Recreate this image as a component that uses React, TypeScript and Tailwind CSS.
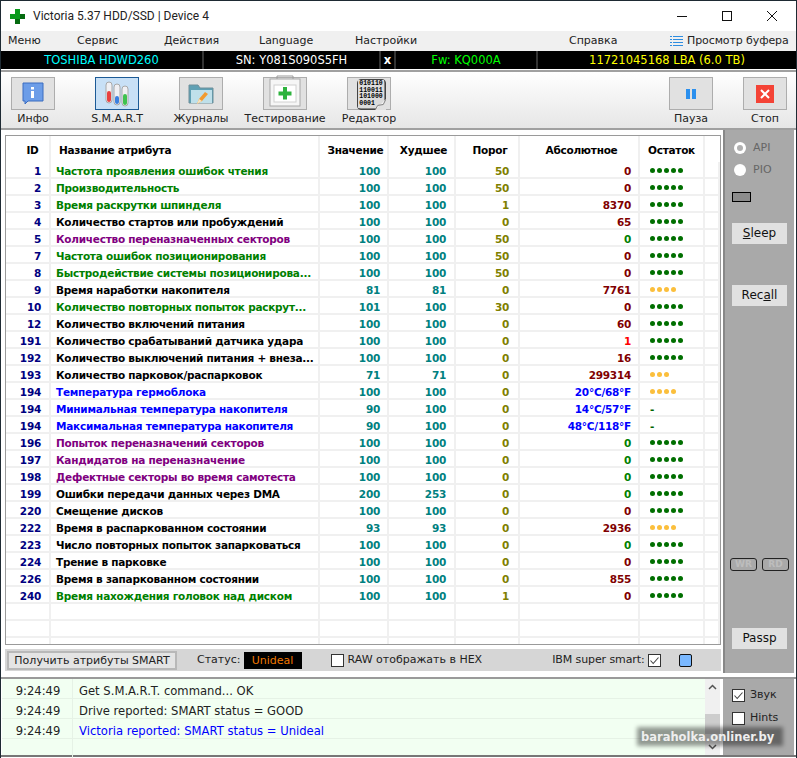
const gridCols = 'grid grid-cols-[45px_269px_69px_67px_64px_120px_65px_1fr]';

type Row = {
  id: number;
  name: string;
  color: string;
  value: number;
  worst: number;
  limit: number;
  raw: string;
  rawColor: string;
  dots: number;
  dotColor?: string;
};

const GREEN = 'text-[#008000]';
const BLACK = 'text-black';
const PURPLE = 'text-[#800080]';
const BLUE = 'text-[#0000ff]';
const MAROON = 'text-[#800000]';
const RAWGREEN = 'text-[#008000]';
const ORANGE = 'bg-[#fbbf3c]';

const rows: Row[] = [
  { id: 1, name: 'Частота проявления ошибок чтения', color: GREEN, value: 100, worst: 100, limit: 50, raw: '0', rawColor: MAROON, dots: 5 },
  { id: 2, name: 'Производительность', color: GREEN, value: 100, worst: 100, limit: 50, raw: '0', rawColor: MAROON, dots: 5 },
  { id: 3, name: 'Время раскрутки шпинделя', color: GREEN, value: 100, worst: 100, limit: 1, raw: '8370', rawColor: MAROON, dots: 5 },
  { id: 4, name: 'Количество стартов или пробуждений', color: BLACK, value: 100, worst: 100, limit: 0, raw: '65', rawColor: MAROON, dots: 5 },
  { id: 5, name: 'Количество переназначенных секторов', color: PURPLE, value: 100, worst: 100, limit: 50, raw: '0', rawColor: RAWGREEN, dots: 5 },
  { id: 7, name: 'Частота ошибок позиционирования', color: GREEN, value: 100, worst: 100, limit: 50, raw: '0', rawColor: MAROON, dots: 5 },
  { id: 8, name: 'Быстродействие системы позиционирова...', color: GREEN, value: 100, worst: 100, limit: 50, raw: '0', rawColor: MAROON, dots: 5 },
  { id: 9, name: 'Время наработки накопителя', color: BLACK, value: 81, worst: 81, limit: 0, raw: '7761', rawColor: MAROON, dots: 4, dotColor: ORANGE },
  { id: 10, name: 'Количество повторных попыток раскрут...', color: GREEN, value: 101, worst: 100, limit: 30, raw: '0', rawColor: MAROON, dots: 5 },
  { id: 12, name: 'Количество включений питания', color: BLACK, value: 100, worst: 100, limit: 0, raw: '60', rawColor: MAROON, dots: 5 },
  { id: 191, name: 'Количество срабатываний датчика удара', color: BLACK, value: 100, worst: 100, limit: 0, raw: '1', rawColor: 'text-[#ff0000]', dots: 5 },
  { id: 192, name: 'Количество выключений питания + внеза...', color: BLACK, value: 100, worst: 100, limit: 0, raw: '16', rawColor: MAROON, dots: 5 },
  { id: 193, name: 'Количество парковок/распарковок', color: BLACK, value: 71, worst: 71, limit: 0, raw: '299314', rawColor: MAROON, dots: 3, dotColor: ORANGE },
  { id: 194, name: 'Температура гермоблока', color: BLUE, value: 100, worst: 100, limit: 0, raw: '20°C/68°F', rawColor: BLUE, dots: 4, dotColor: ORANGE },
  { id: 194, name: 'Минимальная температура накопителя', color: BLUE, value: 90, worst: 100, limit: 0, raw: '14°C/57°F', rawColor: BLUE, dots: 0 },
  { id: 194, name: 'Максимальная температура накопителя', color: BLUE, value: 90, worst: 100, limit: 0, raw: '48°C/118°F', rawColor: BLUE, dots: 0 },
  { id: 196, name: 'Попыток переназначений секторов', color: PURPLE, value: 100, worst: 100, limit: 0, raw: '0', rawColor: RAWGREEN, dots: 5 },
  { id: 197, name: 'Кандидатов на переназначение', color: PURPLE, value: 100, worst: 100, limit: 0, raw: '0', rawColor: RAWGREEN, dots: 5 },
  { id: 198, name: 'Дефектные секторы во время самотеста', color: PURPLE, value: 100, worst: 100, limit: 0, raw: '0', rawColor: RAWGREEN, dots: 5 },
  { id: 199, name: 'Ошибки передачи данных через DMA', color: BLACK, value: 200, worst: 253, limit: 0, raw: '0', rawColor: RAWGREEN, dots: 5 },
  { id: 220, name: 'Смещение дисков', color: BLACK, value: 100, worst: 100, limit: 0, raw: '0', rawColor: MAROON, dots: 5 },
  { id: 222, name: 'Время в распаркованном состоянии', color: BLACK, value: 93, worst: 93, limit: 0, raw: '2936', rawColor: MAROON, dots: 4, dotColor: ORANGE },
  { id: 223, name: 'Число повторных попыток запарковаться', color: BLACK, value: 100, worst: 100, limit: 0, raw: '0', rawColor: RAWGREEN, dots: 5 },
  { id: 224, name: 'Трение в парковке', color: BLACK, value: 100, worst: 100, limit: 0, raw: '0', rawColor: MAROON, dots: 5 },
  { id: 226, name: 'Время в запаркованном состоянии', color: BLACK, value: 100, worst: 100, limit: 0, raw: '855', rawColor: MAROON, dots: 5 },
  { id: 240, name: 'Время нахождения головок над диском', color: GREEN, value: 100, worst: 100, limit: 1, raw: '0', rawColor: MAROON, dots: 5 },
];

function ToolButton({ label, active, width, children }: { label: string; active?: boolean; width: string; children: React.ReactNode }) {
  return (
    <div className={`flex flex-col items-center ${width}`}>
      <div
        className={`w-[44px] h-[33px] shrink-0 border flex items-center justify-center ${
          active ? 'border-[#1c5a96] bg-[#c8e0f6]' : 'border-[#adadad] bg-[#e1e1e1]'
        }`}
      >
        {children}
      </div>
      <span className="mt-[1px] text-[11px] leading-[16px] text-[#222] whitespace-nowrap">{label}</span>
    </div>
  );
}

function Cell({ children, className }: { children?: React.ReactNode; className?: string }) {
  return <div className={`h-[17px] border-r-2 border-b-2 border-[#f0f0f0] leading-[19px] whitespace-nowrap ${className ?? ''}`}>{children}</div>;
}

function Check({ checked, className }: { checked?: boolean; className?: string }) {
  return (
    <span className={`inline-flex shrink-0 w-[13px] h-[13px] border border-[#333] bg-white items-center justify-center ${className ?? ''}`}>
      {checked && (
        <svg width="11" height="11" viewBox="0 0 11 11">
          <path d="M1.5 5.5 L4.2 8.5 L9.5 2.5" fill="none" stroke="#444" strokeWidth="1.1" />
        </svg>
      )}
    </span>
  );
}

export default function App() {
  return (
    <div className="w-[797px] h-[758px] bg-white overflow-hidden relative font-['DejaVu_Sans',sans-serif] border-t border-x border-[#1e2a33] text-[#111]">
      {/* title bar */}
      <div className="h-[30px] flex items-center bg-white">
        <svg className="ml-[9px]" width="15" height="15" viewBox="0 0 15 15">
          <path d="M5 0h5v5h5v5h-5v5H5v-5H0V5h5z" fill="#0a9a1c" />
          <path d="M5 10h5v5H5zM10 5h5v5h-5z" fill="#056b10" />
        </svg>
        <span className="ml-[8px] font-['Roboto',sans-serif] text-[12px] text-[#222]">Victoria 5.37 HDD/SSD | Device 4</span>
        <div className="ml-auto flex items-center mr-[19px] gap-[35px]">
          <svg width="10" height="10" viewBox="0 0 10 10"><path d="M0 5.5h10" stroke="#111" /></svg>
          <svg width="10" height="10" viewBox="0 0 10 10"><rect x="0.5" y="0.5" width="9" height="9" fill="none" stroke="#111" /></svg>
          <svg width="10" height="10" viewBox="0 0 10 10"><path d="M0 0l10 10M10 0L0 10" stroke="#111" /></svg>
        </div>
      </div>

      {/* menu */}
      <div className="h-[20px] bg-[#f0f0f0] relative flex items-center text-[11px] text-[#222]">
        <span className="ml-[7px] w-[69px]">Меню</span>
        <span className="w-[87px]">Сервис</span>
        <span className="w-[95px]">Действия</span>
        <span className="w-[96px]">Language</span>
        <span className="w-[214px]">Настройки</span>
        <span className="w-[101px]">Справка</span>
        <svg width="13" height="13" viewBox="0 0 13 13">
          <path d="M0 1.5h2M3 1.5h10M0 4.5h2M3 4.5h10M0 7.5h2M3 7.5h10M0 10.5h2M3 10.5h10" stroke="#2e8de0" />
        </svg>
        <span className="ml-[4px] tracking-[-0.1px]">Просмотр буфера</span>
      </div>

      {/* drive info */}
      <div className="h-[18px] bg-black flex text-[11.5px] leading-[18px] text-center">
        <div className="w-[201px] text-[#00ffff]">TOSHIBA HDWD260</div>
        <div className="w-[177px] border-l-2 border-[#333] text-white">SN: Y081S090S5FH</div>
        <div className="w-[17px] border-x-2 border-[#333] font-bold text-white">x</div>
        <div className="w-[140px] text-[#00ff00]">Fw: KQ000A</div>
        <div className="flex-1 border-l-2 border-[#333] text-[#ffff00]">11721045168 LBA (6.0 TB)</div>
      </div>

      {/* toolbar */}
      <div className="mt-[1px] h-[60px] border-y-2 border-[#a0a0a0] bg-gradient-to-b from-white to-[#e6e6e6] flex items-start pt-[5px] text-[#222]">
        <ToolButton label="Инфо" width="w-[44px] ml-[10px]">
          <svg width="24" height="24" viewBox="0 0 24 24">
            <path d="M2 1h20v18H7l-3 3v-3H2z" fill="#6c9de8" stroke="#3a6cc0" />
            <rect x="10" y="5" width="3" height="2.5" fill="#fff" />
            <rect x="10" y="9" width="3" height="7" fill="#fff" />
          </svg>
        </ToolButton>
        <ToolButton label="S.M.A.R.T" active width="w-[44px] ml-[40px]">
          <svg width="26" height="27" viewBox="0 0 26 27">
            <rect x="2" y="2" width="6" height="21" rx="3" fill="#f0f0f4" stroke="#a8a8a8" />
            <rect x="3" y="11" width="4" height="11" rx="2" fill="#e94040" />
            <rect x="10" y="4" width="6" height="21" rx="3" fill="#f0f0f4" stroke="#a8a8a8" />
            <rect x="11" y="16" width="4" height="8" rx="2" fill="#3a80e0" />
            <rect x="18" y="6" width="6" height="20" rx="3" fill="#f0f0f4" stroke="#a8a8a8" />
            <rect x="19" y="14" width="4" height="11" rx="2" fill="#3fc24f" />
          </svg>
        </ToolButton>
        <ToolButton label="Журналы" width="w-[44px] ml-[40px]">
          <svg width="26" height="26" viewBox="0 0 26 26">
            <path d="M1 4h9l2 3h13v15H1z" fill="#5fa0b4" stroke="#6f8f9a" />
            <rect x="3" y="9" width="21" height="13" fill="#bfe0ea" />
            <path d="M9 23l2-5 6-7 3 2-6 7z" fill="#f29a2e" />
            <path d="M9 23l2-5 3 2z" fill="#f6e3c0" />
          </svg>
        </ToolButton>
        <ToolButton label="Тестирование" width="w-[44px] ml-[40px]">
          <svg className="mt-[-6px] overflow-visible" width="32" height="32" viewBox="0 0 32 32">
            <path d="M8 4V1h16v3" fill="none" stroke="#9a9a9a" />
            <rect x="1" y="4" width="30" height="27" fill="#f6f6f6" stroke="#a8a8a8" />
            <rect x="5" y="10" width="22" height="17" fill="#fff" stroke="#d0d0d0" />
            <path d="M14 12h4v4.500h4.500v4H18v4h-4v-4H9.500v-4H14z" fill="#2eb33e" />
          </svg>
        </ToolButton>
        <ToolButton label="Редактор" width="w-[44px] ml-[40px]">
          <div className="relative w-[29px] h-[31px] ml-[4px] mt-[1px] bg-[#858585] rounded-[4px] border border-[#444] flex items-center justify-center text-[6.5px] leading-[6.5px] font-['Liberation_Mono',monospace] font-bold text-black">
            <div className="bg-[#dcdcdc] px-[1px] py-[1px]">
              010110<br />110011<br />101000<br />0001
            </div>
            <svg className="absolute right-[-1px] bottom-[-1px]" width="11" height="11" viewBox="0 0 12 12">
              <path d="M12 0v12H0z" fill="#e1e1e1" />
              <path d="M0 12l3-5 6-1 3-6" fill="#f4f4f4" stroke="#777" />
            </svg>
          </div>
        </ToolButton>
        <ToolButton label="Пауза" width="w-[44px] ml-[278px]">
          <div className="flex gap-[2px]">
            <span className="w-[4px] h-[10px] bg-[#2b90ee]" />
            <span className="w-[4px] h-[10px] bg-[#2b90ee]" />
          </div>
        </ToolButton>
        <ToolButton label="Стоп" width="w-[44px] ml-[30px]">
          <div className="w-[18px] h-[18px] bg-[#f44336] flex items-center justify-center">
            <svg width="10" height="10" viewBox="0 0 10 10"><path d="M1 1l8 8M9 1L1 9" stroke="#fff" strokeWidth="2" /></svg>
          </div>
        </ToolButton>
      </div>

      {/* main */}
      <div className="flex h-[543px]">
        <div className="w-[722px] pl-[4px] pt-[5px] pr-[2px] bg-white">
          <div className="h-[510px] overflow-hidden border border-[#9a9a9a] bg-white text-[10.5px] tracking-[-0.25px] font-bold">
            <div className={`${gridCols} h-[26px] text-black`}>
              <div className="text-center pl-[10px] leading-[28px] border-r-2 border-[#f0f0f0]">ID</div>
              <div className="pl-[8px] leading-[28px] border-r-2 border-[#f0f0f0]">Название атрибута</div>
              <div className="text-center pl-[4px] leading-[28px] border-r-2 border-[#f0f0f0]">Значение</div>
              <div className="text-center pl-[4px] leading-[28px] border-r-2 border-[#f0f0f0]">Худшее</div>
              <div className="text-center pl-[6px] leading-[28px] border-r-2 border-[#f0f0f0]">Порог</div>
              <div className="text-center pl-[5px] leading-[28px] border-r-2 border-[#f0f0f0]">Абсолютное</div>
              <div className="text-center leading-[28px] border-r-2 border-[#f0f0f0]">Остаток</div>
              <div />
            </div>
            {rows.map((r, i) => (
              <div key={i} className={`${gridCols} h-[17px]`}>
                <Cell className="text-right pr-[8px] text-[#000080]">{r.id}</Cell>
                <Cell className={`pl-[5px] ${r.color}`}>{r.name}</Cell>
                <Cell className="text-right pr-[7px] text-[#008080]">{r.value}</Cell>
                <Cell className="text-right pr-[8px] text-[#008080]">{r.worst}</Cell>
                <Cell className="text-right pr-[9px] text-[#808000]">{r.limit}</Cell>
                <Cell className={`text-right pr-[7px] ${r.rawColor}`}>{r.raw}</Cell>
                <Cell className="pl-[10px]">
                  {r.dots === 0 ? (
                    <span className="text-[#006400]">-</span>
                  ) : (
                    <span className="flex gap-[2px] h-[17px] items-center">
                      {Array.from({ length: r.dots }).map((_, d) => (
                        <span key={d} className={`w-[5px] h-[5px] rounded-full ${r.dotColor ?? 'bg-[#006f00]'}`} />
                      ))}
                    </span>
                  )}
                </Cell>
                <Cell />
              </div>
            ))}
            {[0, 1, 2].map((i) => (
              <div key={i} className={`${gridCols} h-[17px]`}>
                {[0, 1, 2, 3, 4, 5, 6, 7].map((c) => (
                  <Cell key={c} />
                ))}
              </div>
            ))}
          </div>
          <div className="mt-[4px] h-[22px] bg-[#d6d6d6] flex items-center text-[11px] text-[#222] pl-[2px]">
            <div className="h-[19px] w-[170px] shrink-0 border-2 border-[#b8b8b8] bg-[#e4e4e4] text-center leading-[15px]">Получить атрибуты SMART</div>
            <span className="ml-[20px]">Статус:</span>
            <span className="ml-[3px] w-[58px] h-[17px] bg-black text-center text-[#f07800] leading-[17px]">Unideal</span>
            <Check className="ml-[29px]" />
            <span className="ml-[4px]">RAW отображать в HEX</span>
            <span className="ml-[70px] tracking-[-0.1px]">IBM super smart:</span>
            <Check checked className="ml-[3px]" />
            <span className="ml-[18px] w-[13px] h-[13px] bg-[#7ab8ff] border border-[#111] rounded-[2px]" />
          </div>
        </div>
        <div className="w-[71px] bg-[#a9a9a9] border-l-[2px] border-[#888] text-[11px] text-[#666] flex flex-col items-start pl-[7px] pt-[11px]">
          <div className="flex items-center gap-[7px] h-[14px] ml-[2px]">
            <span className="w-[12px] h-[12px] rounded-full bg-white flex items-center justify-center"><span className="w-[6px] h-[6px] rounded-full bg-[#b0b0b0]" /></span>
            API
          </div>
          <div className="flex items-center gap-[7px] h-[14px] mt-[8px] ml-[2px]">
            <span className="w-[12px] h-[12px] rounded-full bg-white" />
            PIO
          </div>
          <span className="mt-[15px] w-[19px] h-[10px] border border-black bg-[#8c8c8c]" />
          <div className="mt-[21px] w-[55px] h-[21px] bg-[#e1e1e1] text-[12px] text-[#111] text-center leading-[21px]"><u>S</u>leep</div>
          <div className="mt-[41px] w-[55px] h-[21px] bg-[#e1e1e1] text-[12px] text-[#111] text-center leading-[21px]">Rec<u>a</u>ll</div>
          <div className="mt-[252px] flex gap-[5px] ml-[-2px]">
            <span className="w-[27px] h-[13px] border border-[#222] rounded-[3px] text-[9px] leading-[11px] text-center font-bold text-[#bdbdbd]">WR</span>
            <span className="w-[27px] h-[13px] border border-[#222] rounded-[3px] text-[9px] leading-[11px] text-center font-bold text-[#bdbdbd]">RD</span>
          </div>
          <div className="mt-[57px] w-[55px] h-[21px] bg-[#e1e1e1] text-[12px] text-[#111] text-center leading-[21px]">Passp</div>
        </div>
      </div>

      {/* log */}
      <div className="h-[80px] flex border-t-2 border-b-2 border-t-[#9a9a9a] border-b-[#777] mt-[4px]">
        <div className="w-[718px] ml-[1px] bg-[#f2fff2] text-[11.6px] text-[#222] flex relative">
          <div className="flex-1">
            {[
              ['9:24:49', 'Get S.M.A.R.T. command... OK', ''],
              ['9:24:49', 'Drive reported: SMART status = GOOD', ''],
              ['9:24:49', 'Victoria reported: SMART status = Unideal', 'text-[#0000ff]'],
              ['', '', ''],
            ].map((l, i) => (
              <div key={i} className="grid grid-cols-[71px_1fr] h-[20px] border-b border-[#e6f2e6] leading-[25px]">
                <span className="text-center pl-[2px] border-r border-[#e6f2e6]">{l[0]}</span>
                <span className={`pl-[6px] ${l[2]}`}>{l[1]}</span>
              </div>
            ))}
          </div>
          <div className="w-[15px] bg-[#f0f0f0] flex flex-col items-center justify-between text-[#333]">
            <svg className="mt-[5px]" width="9" height="6" viewBox="0 0 9 6"><path d="M1 5l3.5-3.500L8 5" fill="none" stroke="#555" strokeWidth="1.5" /></svg>
            <div className="w-full h-[20px] bg-[#cdcdcd] mb-[-14px]" />
            <svg className="mb-[5px]" width="9" height="6" viewBox="0 0 9 6"><path d="M1 1l3.500 3.500L8 1" fill="none" stroke="#555" strokeWidth="1.5" /></svg>
          </div>
        </div>
        <div className="ml-[3px] w-[71px] bg-[#a9a9a9] text-[11px] text-[#222] pl-[9px] pt-[9px]">
          <div className="flex items-center gap-[5px] h-[14px]"><Check checked />Звук</div>
          <div className="flex items-center gap-[5px] h-[14px] mt-[9px]"><Check />Hints</div>
        </div>
      </div>

      {/* watermark */}
      <div className="absolute left-[636px] top-[726px] w-[146px] h-[19px] bg-[#00000066] blur-[2px]" />
      <div className="absolute left-[640px] top-[728px] text-[11.5px] leading-[16px] font-bold text-[#eeeeee] whitespace-nowrap">baraholka.onliner.by</div>
    </div>
  );
}
